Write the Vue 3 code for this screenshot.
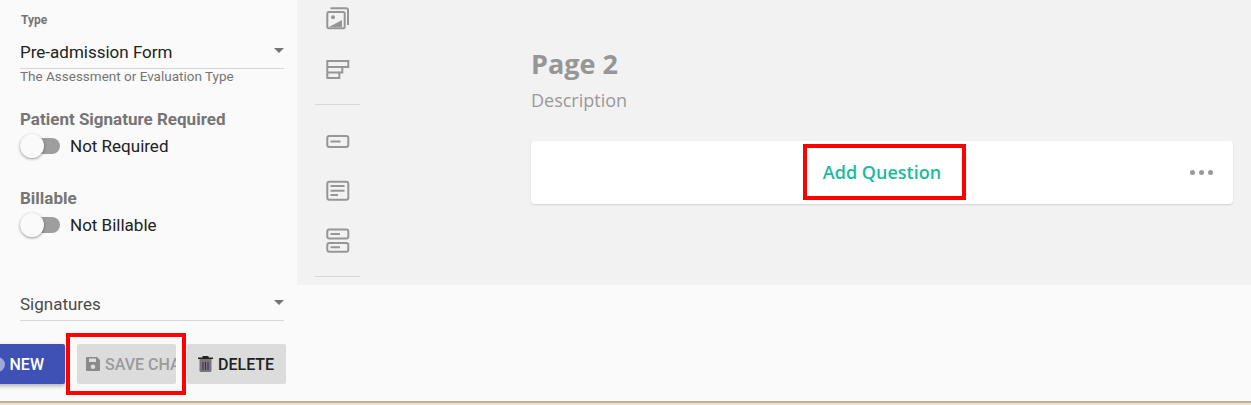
<template>
  <div class="page">
    <div class="main">
      <aside class="sidebar">
        <div class="field-label">Type</div>
        <div class="select">
          <span class="select-val">Pre-admission Form</span>
          <span class="caret"></span>
        </div>
        <div class="hint">The Assessment or Evaluation Type</div>

        <div class="group-label first">Patient Signature Required</div>
        <div class="toggle-row">
          <span class="switch"><span class="knob"></span></span>
          <span>Not Required</span>
        </div>

        <div class="group-label second">Billable</div>
        <div class="toggle-row">
          <span class="switch"><span class="knob"></span></span>
          <span>Not Billable</span>
        </div>

        <div class="select signatures">
          <span class="select-val muted">Signatures</span>
          <span class="caret"></span>
        </div>

        <div class="actions">
          <button class="btn primary">
            <span class="plus"></span>
            NEW
          </button>
          <button class="btn save">
            <svg width="16" height="16" viewBox="0 0 16 16">
              <path
                fill="#8a8a8a"
                fill-rule="evenodd"
                d="M2 1h10l3 3v10a1 1 0 0 1-1 1H2a1 1 0 0 1-1-1V2a1 1 0 0 1 1-1zm2 1.500V6h7V2.500zM8 8.500a2.300 2.300 0 1 0 0 4.600 2.300 2.300 0 0 0 0-4.600z"
              />
            </svg>
            <span class="save-text">SAVE CHANGES</span>
            <span class="callout save-callout"></span>
          </button>
          <button class="btn delete">
            <svg width="15" height="16" viewBox="0 0 15 16">
              <rect x="0" y="1.500" width="15" height="1.500" fill="#222" />
              <rect x="4.500" y="0" width="6" height="2" fill="#222" />
              <path fill="#777" d="M1.500 3h12v11.500a1.500 1.500 0 0 1-1.500 1.500H3a1.500 1.500 0 0 1-1.500-1.500z" />
              <path stroke="#4a1f6b" stroke-width="1" d="M5 6v8M7.500 6v8M10 6v8" />
            </svg>
            DELETE
          </button>
        </div>
      </aside>

      <div class="right">
        <section class="canvas">
          <div class="rail">
            <svg class="tool" viewBox="0 0 24 24" fill="none" stroke="#969696" stroke-width="2">
              <rect x="2.300" y="5" width="17.400" height="16.300" rx="1.500" />
              <path d="M5.500 1.300H21a2 2 0 0 1 2 2V18" />
              <circle cx="8" cy="10.300" r="2" fill="#969696" stroke="none" />
              <path d="M4 20l13-7v7z" fill="#969696" stroke="none" />
            </svg>
            <svg class="tool" viewBox="0 0 24 24" fill="none" stroke="#969696" stroke-width="2">
              <path d="M2.300 4h21v6h-6v5.500h-3V21H2.300z" />
              <path d="M2.300 10h15M2.300 15.500h12" />
            </svg>
            <div class="rule"></div>
            <svg class="tool" viewBox="0 0 24 24" fill="none" stroke="#969696" stroke-width="2">
              <rect x="2.300" y="7" width="21" height="11" rx="2" />
              <path d="M5.500 12.500h10" />
            </svg>
            <svg class="tool" viewBox="0 0 24 24" fill="none" stroke="#969696" stroke-width="2">
              <rect x="2.300" y="2.700" width="21" height="18" rx="2" />
              <path d="M5.500 7h14M5.500 11.700h14M5.500 16h7.500" />
            </svg>
            <svg class="tool" viewBox="0 0 24 24" fill="none" stroke="#969696" stroke-width="2">
              <rect x="2.300" y="0.500" width="21" height="9" rx="2" />
              <rect x="2.300" y="14" width="21" height="8.700" rx="2" />
              <path d="M5.500 5h9.500M5.500 18.300h9.500" />
            </svg>
            <div class="rule last"></div>
          </div>

          <div class="content">
            <h2>Page 2</h2>
            <p>Description</p>
            <div class="card">
              <span class="add">
                Add Question
                <span class="callout add-callout"></span>
              </span>
              <span class="dots"><i></i><i></i><i></i></span>
            </div>
          </div>
        </section>
      </div>
    </div>
    <div class="edge"></div>
  </div>
</template>

<script setup>
</script>

<style>
html,
body {
  margin: 0;
  background: #fafafa;
}
</style>

<style scoped>
* {
  box-sizing: border-box;
}

.page {
  width: 1251px;
  height: 405px;
  overflow: hidden;
  display: flex;
  flex-direction: column;
  font-family: Roboto, sans-serif;
  background: #fafafa;
}

.main {
  flex: 1;
  display: flex;
  min-height: 0;
}

.sidebar {
  width: 297px;
  flex-shrink: 0;
  padding: 13px 13px 0 20px;
}

.field-label {
  font-size: 12px;
  line-height: 14px;
  font-weight: 700;
  color: #757575;
  margin-left: 1px;
}

.select {
  display: flex;
  align-items: center;
  justify-content: space-between;
  height: 35px;
  margin-top: 7px;
  border-bottom: 1px solid #d6d6d6;
  padding-top: 2px;
}

.select-val {
  font-size: 17px;
  color: #212121;
}
.select-val.muted {
  color: #4a4a4a;
}

.caret {
  width: 0;
  height: 0;
  border-left: 5px solid transparent;
  border-right: 5px solid transparent;
  border-top: 5px solid #757575;
  margin-top: -3px;
}

.hint {
  font-size: 13.500px;
  line-height: 15px;
  color: #757575;
}

.group-label {
  font-size: 17px;
  line-height: 20px;
  font-weight: 700;
  color: #757575;
}
.group-label.first {
  margin-top: 25px;
}
.group-label.second {
  margin-top: 30px;
}

.toggle-row {
  display: flex;
  align-items: center;
  gap: 10px;
  height: 24px;
  margin-top: 5px;
  font-size: 17px;
  color: #212121;
}

.switch {
  position: relative;
  width: 40px;
  height: 16px;
  border-radius: 8px;
  background: #9e9e9e;
}

.knob {
  position: absolute;
  left: 0;
  top: -4px;
  width: 24px;
  height: 24px;
  border-radius: 50%;
  background: #fafafa;
  box-shadow: 0 1px 3px rgba(0, 0, 0, 0.4);
}

.signatures {
  margin-top: 49px;
}

.actions {
  display: flex;
  gap: 11px;
  margin: 23px 0 0 -40px;
  width: 306px;
}

.btn {
  position: relative;
  height: 40px;
  border: none;
  border-radius: 2px;
  display: flex;
  align-items: center;
  font-family: Roboto, sans-serif;
  font-size: 16px;
  font-weight: 500;
  padding: 0 8px;
  flex-shrink: 0;
}

.primary {
  width: 85px;
  background: #3f51b5;
  color: #fff;
  justify-content: flex-end;
  padding-right: 21px;
  box-shadow: 0 2px 4px rgba(0, 0, 0, 0.3);
  gap: 5px;
}

.plus {
  width: 15px;
  height: 15px;
  border-radius: 50%;
  background: #9fa8da;
}

.save {
  width: 99px;
  margin-left: 1px;
  padding-right: 0;
  background: #dcdcdc;
  color: #9a9a9a;
  gap: 4px;
}

.save-text {
  white-space: nowrap;
  overflow: hidden;
  flex: 1;
  min-width: 0;
  text-align: left;
}

.delete {
  width: 99px;
  background: #dcdcdc;
  color: #212121;
  gap: 5px;
  padding-left: 11px;
}

.callout {
  position: absolute;
  border: 4px solid #ff0000;
  pointer-events: none;
}

.save-callout {
  left: -11px;
  top: -11px;
  width: 120px;
  height: 62px;
}

.right {
  flex: 1;
  min-width: 0;
}

.canvas {
  height: 285px;
  background: #f2f2f2;
  display: flex;
}

.rail {
  width: 234px;
  flex-shrink: 0;
  padding: 7px 0 0 18px;
}

.tool {
  display: block;
  width: 24px;
  height: 24px;
  margin: 0 0 26px 10px;
  overflow: visible;
}

.rule {
  width: 45px;
  height: 1px;
  background: #d8d8d8;
  margin: -3px 0 24px 0;
}
.rule.last {
  margin-top: -3px;
}

.content {
  flex: 1;
  padding: 0 18px 0 0;
  font-family: 'Open Sans', sans-serif;
}

h2 {
  margin: 46px 0 0;
  font-size: 27px;
  line-height: 36px;
  font-weight: 700;
  color: #969696;
}

p {
  margin: 6px 0 0;
  font-size: 18px;
  line-height: 24px;
  color: #999;
}

.card {
  position: relative;
  height: 63px;
  margin-top: 29px;
  background: #fff;
  border-radius: 4px;
  box-shadow: 0 1px 2px rgba(0, 0, 0, 0.14);
  display: flex;
  align-items: center;
  justify-content: center;
}

.add {
  position: relative;
  padding-bottom: 2px;
  font-size: 18px;
  font-weight: 600;
  color: #1abc9c;
}

.add-callout {
  left: -20px;
  top: -16px;
  width: 163px;
  height: 56px;
}

.dots {
  position: absolute;
  right: 20px;
  top: 29px;
  display: flex;
  gap: 4px;
}
.dots i {
  width: 5px;
  height: 5px;
  border-radius: 50%;
  background: #999;
}

.edge {
  height: 4px;
  flex-shrink: 0;
  border-top: 2px solid #bcb09f;
  background: #efe2c8;
}
</style>
